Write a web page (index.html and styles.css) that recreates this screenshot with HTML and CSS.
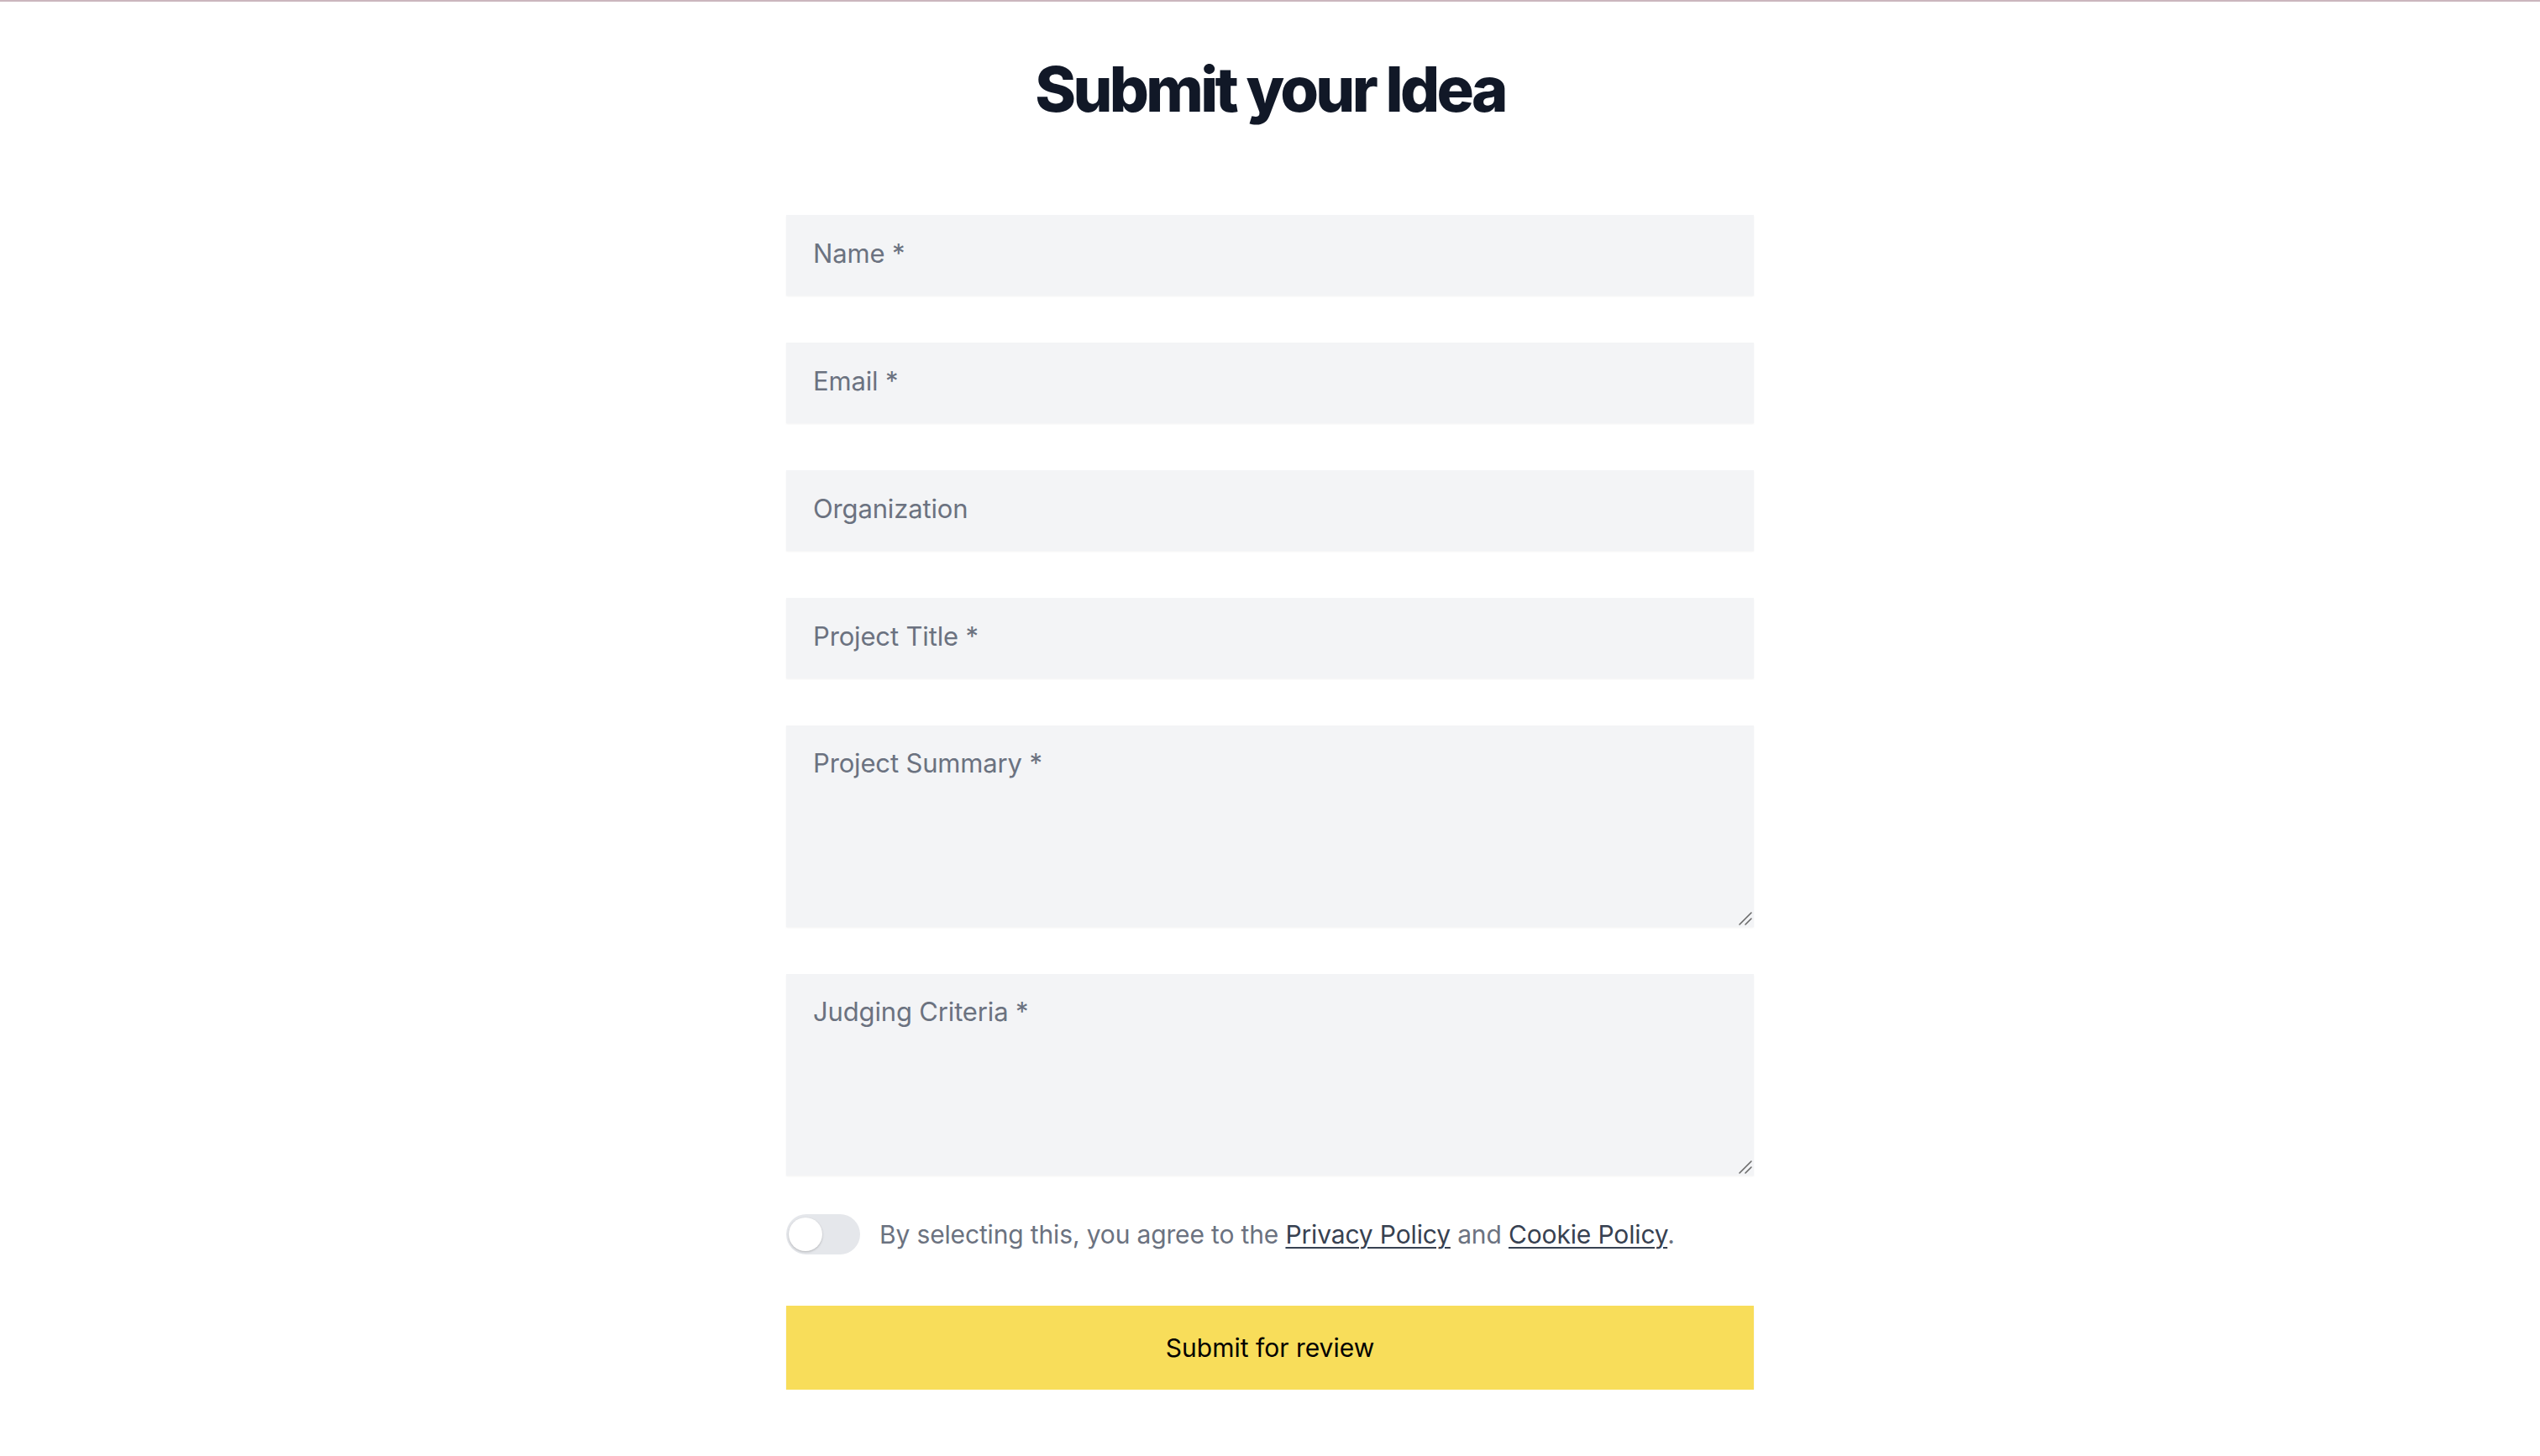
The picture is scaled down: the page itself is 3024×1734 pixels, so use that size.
FILE: index.html
```html
<!DOCTYPE html>
<html lang="en">
<head>
<meta charset="utf-8">
<title>Submit your Idea</title>
<link rel="stylesheet" href="styles.css">
</head>
<body>
<div class="page">
  <h1 class="title">Submit your Idea</h1>
  <form class="form">
    <input class="field" type="text" placeholder="Name *">
    <input class="field" type="email" placeholder="Email *">
    <input class="field" type="text" placeholder="Organization">
    <input class="field" type="text" placeholder="Project Title *">
    <div class="area-wrap">
      <textarea class="field area" placeholder="Project Summary *"></textarea>
      <svg class="grip" width="18" height="18" viewBox="0 0 18 18" aria-hidden="true"><path d="M2 16 L16 2 M9 16 L16 9" stroke="#6a6a6a" stroke-width="1.6" stroke-linecap="round"/></svg>
    </div>
    <div class="area-wrap last">
      <textarea class="field area" placeholder="Judging Criteria *"></textarea>
      <svg class="grip" width="18" height="18" viewBox="0 0 18 18" aria-hidden="true"><path d="M2 16 L16 2 M9 16 L16 9" stroke="#6a6a6a" stroke-width="1.6" stroke-linecap="round"/></svg>
    </div>
    <div class="consent">
      <span class="switch"><span class="knob"></span></span>
      <span class="consent-text">By selecting this, you agree to the <a href="#" class="link">Privacy Policy</a> and <a href="#" class="link">Cookie Policy</a>.</span>
    </div>
    <button type="button" class="submit">Submit for review</button>
  </form>
</div>
</body>
</html>
```

FILE: styles.css
```css
html, body {
  margin: 0;
  padding: 0;
  background: #ffffff;
}
body {
  font-family: Inter, "Noto Sans", sans-serif;
  border-top: 2px solid #cbb6be;
}
.page {
  width: 1152px;
  margin: 0 auto;
  display: flex;
  flex-direction: column;
}
.title {
  margin: 67px 0 0;
  font-size: 74px;
  line-height: 1;
  font-weight: 800;
  letter-spacing: -0.05em;
  color: #111827;
  text-align: center;
}
.form {
  margin-top: 113px;
  display: flex;
  flex-direction: column;
}
.field {
  box-sizing: border-box;
  width: 100%;
  height: 96px;
  margin: 0 0 56px;
  padding: 22px 32px 27px;
  border: none;
  border-radius: 0;
  background: #f3f4f6;
  box-shadow: 0 1px 2px rgba(0, 0, 0, 0.05);
  font-family: Inter, "Noto Sans", sans-serif;
  font-size: 31px;
  letter-spacing: -0.005em;
  line-height: 46px;
  color: #111827;
  outline: none;
}
.field::placeholder {
  color: #6b7280;
  opacity: 1;
}
.area-wrap {
  position: relative;
  margin-bottom: 56px;
}
.area-wrap.last {
  margin-bottom: 46px;
}
.area {
  height: 240px;
  resize: none;
  display: block;
  margin: 0;
}
.grip {
  position: absolute;
  right: 1px;
  bottom: 1px;
  pointer-events: none;
}
.consent {
  display: flex;
  align-items: center;
  gap: 23px;
  height: 48px;
}
.switch {
  box-sizing: border-box;
  flex: none;
  width: 88px;
  height: 48px;
  border-radius: 24px;
  background: #e5e7eb;
  padding: 4px 3px;
  display: flex;
}
.knob {
  width: 40px;
  height: 40px;
  border-radius: 50%;
  background: #ffffff;
  box-shadow: 0 1px 3px rgba(0, 0, 0, 0.15), 0 1px 2px rgba(0, 0, 0, 0.08);
}
.consent-text {
  font-size: 30px;
  line-height: 48px;
  color: #6b7280;
  letter-spacing: -0.005em;
}
.link {
  color: #374151;
  text-decoration: underline;
  text-decoration-thickness: 2px;
  text-underline-offset: 4px;
}
.submit {
  margin-top: 61px;
  height: 100px;
  width: 100%;
  border: none;
  border-radius: 0;
  background: #f8dd5a;
  box-shadow: 0 1px 2px rgba(0, 0, 0, 0.05);
  font-family: Inter, "Noto Sans", sans-serif;
  font-size: 30px;
  color: #000000;
  cursor: pointer;
}
```
